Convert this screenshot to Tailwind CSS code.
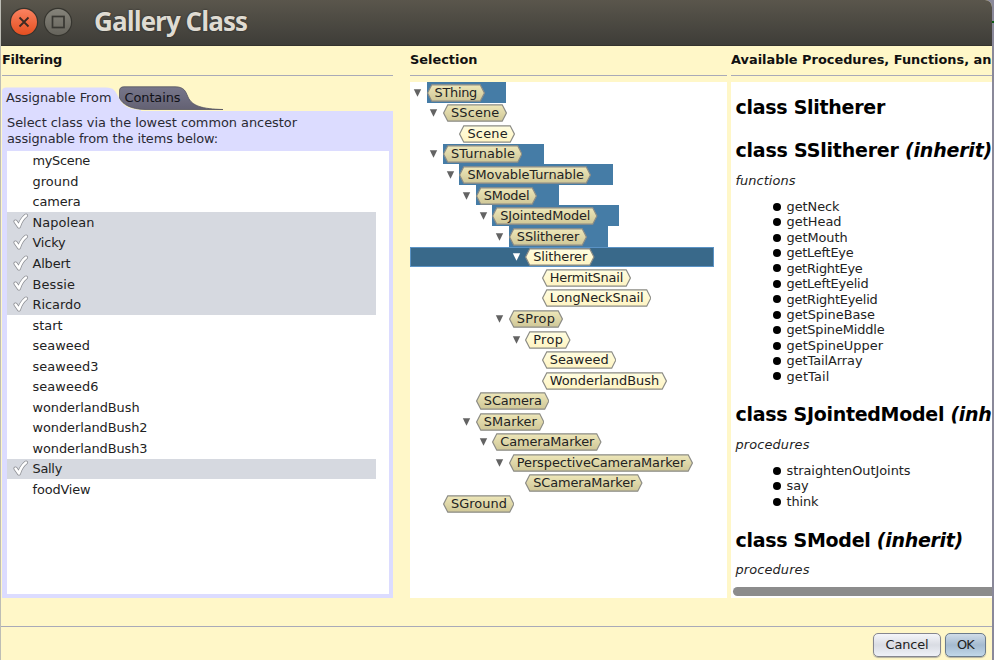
<!DOCTYPE html>
<html lang="en">
<head>
<meta charset="utf-8">
<title>Gallery Class</title>
<script src="https://cdn.jsdelivr.net/npm/@tailwindcss/browser@4"></script>
</head>
<body class="h-[660px] w-[994px] overflow-hidden bg-[#8a899a] font-['DejaVu_Sans',sans-serif] text-[12.9px] leading-[15.5px] text-[#222]">
<div class="flex h-[660px] w-[992px] flex-col overflow-hidden rounded-tr-[7px] border-l border-[#bdbdb5] bg-[#fff7c8]">
  <header class="flex h-[46px] shrink-0 items-center border-b border-[#34332e] bg-linear-to-b from-[#5a564c] to-[#3e3d38] pl-[8px]">
    <svg class="mt-[-2px]" width="66" height="32" viewBox="0 0 66 32">
      <defs>
        <linearGradient id="red" x1="0" y1="0" x2="0" y2="1"><stop offset="0" stop-color="#fa8260"/><stop offset="1" stop-color="#e44f20"/></linearGradient>
        <linearGradient id="gray" x1="0" y1="0" x2="0" y2="1"><stop offset="0" stop-color="#85837a"/><stop offset="1" stop-color="#66645c"/></linearGradient>
      </defs>
      <circle cx="15" cy="16" r="14.2" fill="#36352f"/><circle cx="15" cy="16" r="13" fill="url(#red)"/>
      <path d="M10.5 11.5l9 9M19.500 11.500l-9 9" stroke="#3c2a22" stroke-width="1.8"/>
      <circle cx="49" cy="16" r="14.2" fill="#36352f"/><circle cx="49" cy="16" r="13" fill="url(#gray)"/>
      <rect x="43.500" y="10.500" width="11.500" height="11" fill="none" stroke="#383732" stroke-width="1.700"/>
    </svg>
    <h1 class="mt-[-3px] ml-[19px] whitespace-nowrap font-['Open_Sans',sans-serif] text-[26px] leading-[34px] font-bold text-[#dfdbd2] [text-shadow:0_0_2px_#222]"><span data-w="153">Gallery Class</span></h1>
  </header>

  <main class="flex h-[552px] shrink-0 pl-px">
    <section class="w-[391px] shrink-0">
      <h2 class="h-[30px] border-b border-[#a9aab8] pt-[6px] font-bold text-[#111]"><span data-w="60">Filtering</span></h2>
      <div class="relative mt-[10px] h-[25px]">
        <svg class="absolute top-0 left-0" width="225" height="25" viewBox="0 0 225 25">
          <defs><linearGradient id="tab" x1="0" y1="0" x2="0" y2="1"><stop offset="0" stop-color="#77768a"/><stop offset="1" stop-color="#636173"/></linearGradient></defs>
          <path d="M0 25V5Q0 1.500 4 1.500H104C112 1.500 113 5 116 10C120 19 125 23.500 139 24V25Z" fill="#dcdcff"/>
          <path d="M117.500 5Q117.500 .8 122 .8H173C182 .8 183.500 5 186 11C190 20 200 23 221 23.500H143C129 23 121 19 117.500 12Z" fill="url(#tab)" stroke="#55545f" stroke-width=".8"/>
        </svg>
        <div class="relative flex pt-[4px] pl-[4px] text-[#2a2a33]"><span class="w-[118.500px]"><span data-w="105.500">Assignable From</span></span><span class="text-[#111118]" data-w="56">Contains</span></div>
      </div>
      <div class="h-[487px] bg-[#dcdcff] px-[5px] pt-[4px] pr-[4px]">
        <p class="h-[35.500px] leading-[15.500px] text-[#2a2a33]"><span data-w="290">Select class via the lowest common ancestor</span><br><span data-w="211">assignable from the items below:</span></p>
        <div id="items" class="h-[443.500px] bg-white"></div>
      </div>
    </section>

    <section class="ml-[17px] w-[317px] shrink-0">
      <h2 class="h-[30px] border-b border-[#a9aab8] pt-[6px] font-bold text-[#111]"><span data-w="67.500">Selection</span></h2>
      <div id="tree" class="mt-[6px] h-[516px] bg-white"></div>
    </section>

    <section class="ml-[4px] w-[261px] shrink-0 overflow-hidden whitespace-nowrap">
      <h2 class="h-[30px] border-b border-[#a9aab8] pt-[6px] font-bold text-[#111]"><span data-w="260.500">Available Procedures, Functions, an</span></h2>
      <div class="mt-[6px] flex h-[516px] flex-col bg-white pl-[4.500px]">
        <h3 class="mt-[13px] text-[19px] leading-[24px] font-bold text-black"><span data-w="149.500">class Slitherer</span></h3>
        <h3 class="mt-[19px] text-[19px] leading-[24px] font-bold text-black"><span data-w="256.500">class SSlitherer <i>(inherit)</i></span></h3>
        <p class="mt-[10.500px] italic"><span data-w="60">functions</span></p>
        <ul id="functions" class="mt-[11px]"></ul>
        <h3 class="mt-[18px] text-[19px] leading-[24px] font-bold text-black"><span data-w="256">class SJointedModel <i>(inh</i></span></h3>
        <p class="mt-[10.500px] italic"><span data-w="74">procedures</span></p>
        <ul id="procedures" class="mt-[11px]"></ul>
        <h3 class="mt-[18.500px] text-[19px] leading-[24px] font-bold text-black"><span data-w="227.500">class SModel <i>(inherit)</i></span></h3>
        <p class="mt-[10px] italic"><span data-w="74">procedures</span></p>
        <div class="mt-auto mb-[2px] -ml-[2.500px] h-[9px] shrink-0 rounded-l-full bg-[#8c8c8c]"></div>
      </div>
    </section>
  </main>

  <footer class="mt-[28px] flex h-[34px] shrink-0 justify-end gap-[4px] border-t border-[#a9aab8] pt-[6px] pr-[6px]">
    <button class="h-[24px] w-[68px] rounded-[5px] border border-[#85868f] bg-linear-to-b from-[#f5f6fa] via-[#d9dce3] to-[#eff1f8] shadow-[0_1px_1px_#b5b2a0]"><span data-w="43">Cancel</span></button>
    <button class="h-[24px] w-[41px] rounded-[5px] border border-[#6a7a8b] bg-linear-to-b from-[#d0dce8] via-[#a5bbd0] to-[#c1d7e9] shadow-[0_1px_1px_#b5b2a0]"><span data-w="17">OK</span></button>
  </footer>
</div>
<div class="absolute top-[21px] left-[992px] h-[2px] w-[2px] bg-[#0c5a14]"></div>

<script>
const items = [['myScene',57.500],['ground',46],['camera',48],['Napolean',62,1],['Vicky',33,1],['Albert',38,1],['Bessie',42.500,1],['Ricardo',48.500,1],['start',30],['seaweed',57.500],['seaweed3',66],['seaweed6',66],['wonderlandBush',107],['wonderlandBush2',115],['wonderlandBush3',115],['Sally',29.500,1],['foodView',58]];
const check = '<svg class="-mt-px" width="16" height="17" viewBox="0 0 16 17"><path d="M2.500 8.500L6 13.500Q8 6.500 13 2.500" fill="none" stroke="#8d8f94" stroke-width="4" stroke-linecap="round" stroke-linejoin="round"/><path d="M2.500 8.500L6 13.500Q8 6.500 13 2.500" fill="none" stroke="#fff" stroke-width="2.500" stroke-linecap="round" stroke-linejoin="round"/></svg>';
document.getElementById('items').innerHTML = items.map(([t, w, on]) =>
  `<div class="flex h-[20.560px] w-[369px] items-center pl-[6px] ${on ? 'bg-[#d6d9e0]' : ''}"><div class="w-[19.500px] shrink-0">${on ? check : ''}</div><span class="pt-[.5px]" data-w="${w}">${t}</span></div>`).join('');

// name, depth, tag width, has children, abstract, band width
const nodes = [['SThing',0,58,1,1,79.500],['SScene',1,64,1,1],['Scene',2,56,0,0],['STurnable',1,79.500,1,1,101.500],['SMovableTurnable',2,132,1,1,153.500],['SModel',3,61,1,1,83],['SJointedModel',4,105.500,1,1,127],['SSlitherer',5,78,1,1,99.500],['Slitherer',6,69.500,1,0],['HermitSnail',7,89,0,0],['LongNeckSnail',7,109.500,0,0],['SProp',5,54,1,1],['Prop',6,45.500,1,0],['Seaweed',7,74.500,0,0],['WonderlandBush',7,125,0,0],['SCamera',3,73.500,0,1],['SMarker',3,68.500,1,1],['CameraMarker',4,109.500,1,1],['PerspectiveCameraMarker',5,184,1,1],['SCameraMarker',6,117.500,0,1],['SGround',1,71.500,0,1]];
document.getElementById('tree').innerHTML = nodes.map(([t, d, w, kids, abs, band]) => {
  const sel = t === 'Slitherer';
  const arrow = kids ? `<svg width="9" height="8" viewBox="0 0 9 8"><path d="M.8 .3H8.200L4.500 7.700Z" fill="${sel ? '#fff' : '#636363'}"/></svg>` : '';
  const g = abs ? 'url(#tan)' : 'url(#cream)';
  return `<div class="flex h-[20.570px] items-center ${sel ? 'w-[304px] border border-[#5b93c5] bg-[#39698a]' : ''}" style="padding-left:${3 + d * 16.45 - (sel ? 1 : 0)}px">
    <div class="w-[13.500px] shrink-0 pt-px">${arrow}</div>
    <div class="flex h-[20.570px] shrink-0 items-center pt-px ${band ? 'bg-[#457ca6]' : ''}" style="width:${band || w}px">
      <div class="relative h-[18px] shrink-0" style="width:${w}px">
        <svg class="absolute inset-0" width="${w}" height="18"><path d="M.6 9L4.800 .8H${w - 4.8}L${w - .6} 9L${w - 4.8} 17.200H4.800Z" fill="${g}" stroke="#8c8c86" stroke-width="1.200"/></svg>
        <span class="relative ml-[8px] block w-max leading-[18px]" data-w="${w - 15.5}">${t}</span>
      </div>
    </div></div>`;
}).join('');

const bullets = list => list.map(([t, w]) =>
  `<li class="flex h-[15.430px] items-center pl-[37.500px]"><i class="mr-[5.500px] size-[8px] rounded-full bg-black"></i><span data-w="${w}">${t}</span></li>`).join('');
document.getElementById('functions').innerHTML = bullets([['getNeck',53],['getHead',55],['getMouth',61],['getLeftEye',67],['getRightEye',76],['getLeftEyelid',82],['getRightEyelid',91],['getSpineBase',88.500],['getSpineMiddle',98],['getSpineUpper',96.500],['getTailArray',76],['getTail',43]]);
document.getElementById('procedures').innerHTML = bullets([['straightenOutJoints',124],['say',22],['think',32]]);

// Spread letters so that each label fills its measured width.
function fit() {
  document.querySelectorAll('[data-w]').forEach(el => {
    el.style.whiteSpace = 'nowrap';
    el.style.letterSpacing = '0px';
    const r = document.createRange();
    r.selectNodeContents(el);
    const w = r.getBoundingClientRect().width;
    el.style.letterSpacing = (Number(el.dataset.w) - w) / el.textContent.length + 'px';
  });
}
fit();
addEventListener('load', () => { fit(); requestAnimationFrame(fit); });
document.fonts.ready.then(fit);
</script>
<svg class="absolute" width="0" height="0"><defs>
  <linearGradient id="tan" x1="0" y1="0" x2="0" y2="1"><stop offset="0" stop-color="#eee7b9"/><stop offset="1" stop-color="#cfc797"/></linearGradient>
  <linearGradient id="cream" x1="0" y1="0" x2="0" y2="1"><stop offset="0" stop-color="#fffde0"/><stop offset="1" stop-color="#fff4c2"/></linearGradient>
</defs></svg>
</body>
</html>
